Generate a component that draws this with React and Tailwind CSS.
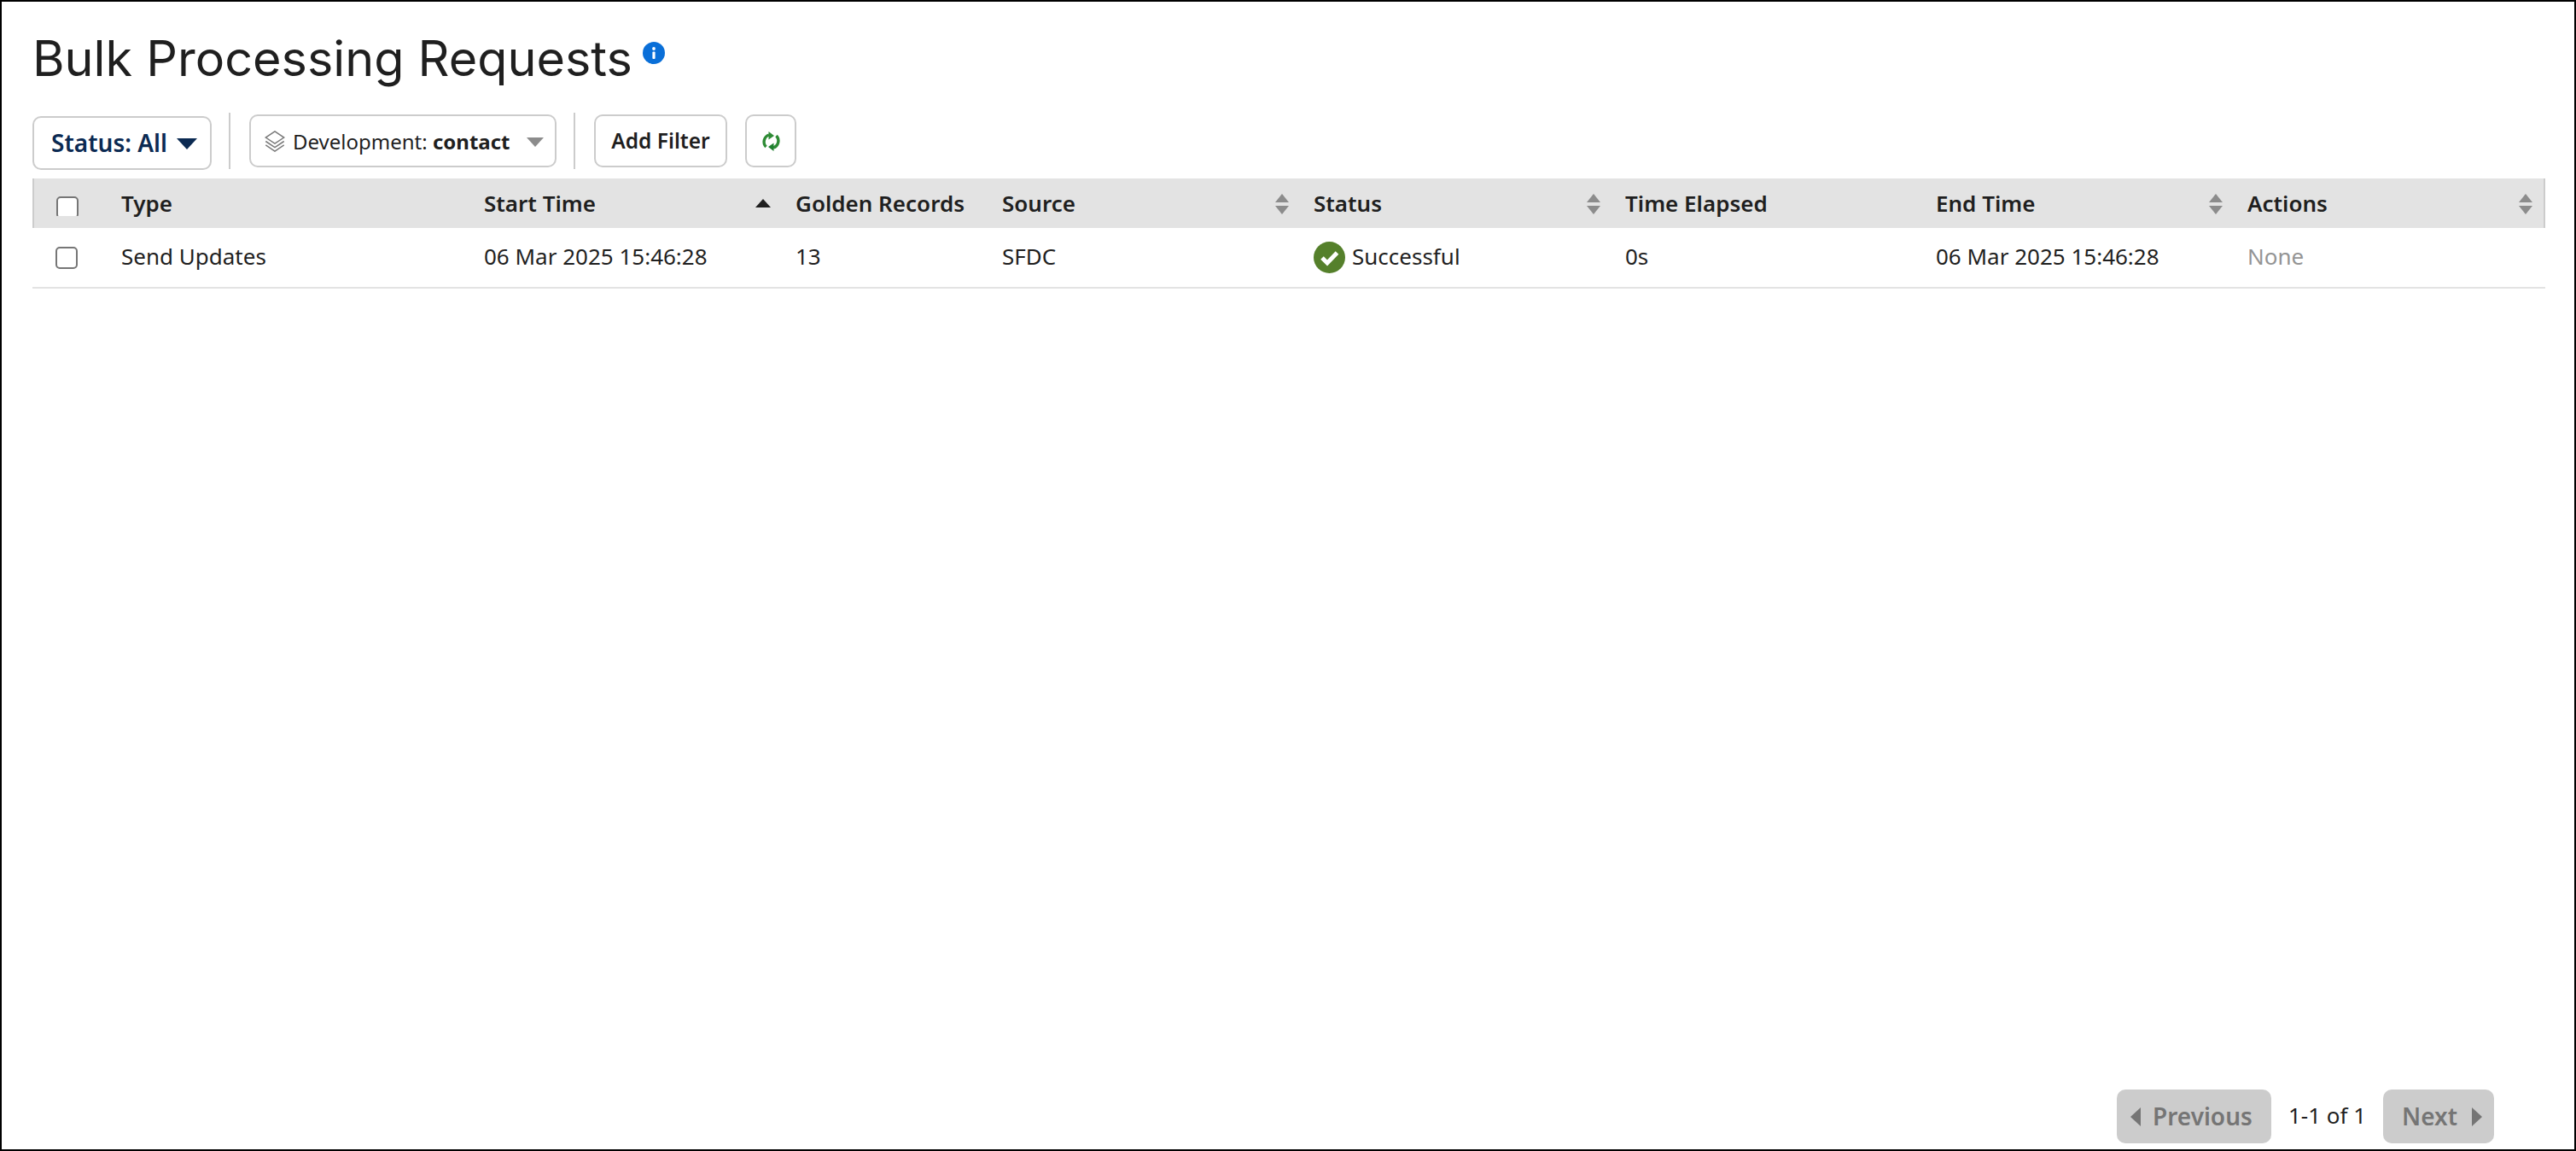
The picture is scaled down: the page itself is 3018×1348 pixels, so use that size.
import React from "react";

const columns = [
  { label: "Type" },
  { label: "Start Time", sort: "asc" },
  { label: "Golden Records" },
  { label: "Source", sort: "both" },
  { label: "Status", sort: "both" },
  { label: "Time Elapsed" },
  { label: "End Time", sort: "both" },
  { label: "Actions", sort: "last" },
];

const GRID = "grid grid-cols-[84px_425px_365px_242px_365px_365px_364px_365px_369px]";

function SortIcon({ kind }) {
  if (kind === "asc") {
    return (
      <svg width="18" height="11" viewBox="0 0 18 11" className="absolute right-[9px] top-[24px]">
        <path d="M9 0 L18 10 L0 10 Z" fill="#1f1f1f" />
      </svg>
    );
  }
  return (
    <svg
      width="18"
      height="24"
      viewBox="0 0 18 24"
      className={kind === "last" ? "absolute right-[14px] top-[18px]" : "absolute right-[8px] top-[18px]"}
    >
      <path d="M9 0 L17 10 L1 10 Z" fill="#8c8c8c" />
      <path d="M9 24 L17 14 L1 14 Z" fill="#8c8c8c" />
    </svg>
  );
}

function Box() {
  return <div className="w-[26px] h-[26px] rounded-[5px] border-2 border-[#767676] bg-white" />;
}

export default function App() {
  return (
    <div className="h-[1348px] border-2 border-black bg-white flex flex-col font-['Noto_Sans',sans-serif] text-[#1f1f1f] overflow-hidden">
      <div className="pl-[36px] pr-[34px] pt-[30px] flex items-start h-[132px]">
        <h1 className="font-['Inter',sans-serif] font-normal text-[57.5px] leading-[72px] text-[#1f1f1f]">
          Bulk Processing Requests
        </h1>
        <svg width="26" height="26" viewBox="0 0 26 26" className="ml-[12px] mt-[17px]">
          <circle cx="13" cy="13" r="13" fill="#0a6fd8" />
          <circle cx="13" cy="8" r="1.9" fill="#fff" />
          <rect x="11.4" y="11.4" width="3.2" height="8.6" rx="1" fill="#fff" />
        </svg>
      </div>

      <div className="pl-[36px] pr-[34px] flex items-start h-[75px]">
        <button className="w-[210px] h-[63px] mt-[2px] pb-[2px] rounded-[10px] border-2 border-[#cccccc] flex items-center pl-[20px] text-[#0b2a52] text-[28px] font-semibold">
          Status: All
          <svg width="24" height="13" viewBox="0 0 24 13" className="ml-[11px] mt-[4px]">
            <path d="M0 0 H24 L12 13 Z" fill="#0b2a52" />
          </svg>
        </button>
        <div className="w-[2px] h-[66px] bg-[#cccccc] ml-[20px] mr-[22px] -mt-[2px]" />
        <button className="w-[360px] h-[62px] rounded-[10px] border-2 border-[#cccccc] flex items-center pl-[16px] text-[24px]">
          <svg width="24" height="25" viewBox="2 1 26 28" fill="none" stroke="#7a7a7a" strokeWidth="1.7" className="mr-[9px]">
            <path d="M15 2 L27 10 L15 18 L3 10 Z" />
            <path d="M3 15 L15 23 L27 15" />
            <path d="M3 20 L15 28 L27 20" />
          </svg>
          <span className="pt-[2px]">Development:&nbsp;</span>
          <span className="font-bold pt-[2px]">contact</span>
          <svg width="20" height="11" viewBox="0 0 20 11" className="ml-[19px] mt-[2px]">
            <path d="M0 0 H20 L10 11 Z" fill="#8c8c8c" />
          </svg>
        </button>
        <div className="w-[2px] h-[66px] bg-[#cccccc] ml-[20px] mr-[22px] -mt-[2px]" />
        <button className="w-[156px] h-[62px] rounded-[10px] border-2 border-[#cccccc] flex items-center justify-center text-[24.5px] font-semibold">
          Add Filter
        </button>
        <button className="w-[60px] h-[62px] ml-[21px] rounded-[10px] border-2 border-[#cccccc] flex items-center justify-center">
          <svg width="25" height="23" viewBox="0 0 25 23" fill="none">
            <path d="M10 4 A8.5 8.5 0 0 0 6.5 18" stroke="#2e8b35" strokeWidth="3.4" />
            <path d="M15 19 A8.5 8.5 0 0 0 18.5 5" stroke="#2e8b35" strokeWidth="3.4" />
            <path d="M9.5 0 L16 5 L9.5 9.5 Z" fill="#2e8b35" />
            <path d="M15.5 23 L9 18 L15.5 13.5 Z" fill="#1f7f2f" />
          </svg>
        </button>
      </div>

      <div className="pl-[36px] pr-[34px]">
        <div className={`${GRID} h-[58px] bg-[#e3e3e3] shadow-[inset_2px_0_0_#cccccc,inset_-2px_0_0_#cccccc] text-[26px] font-semibold items-center`}>
          <div className="h-full pl-[28px] pt-[21px]">
            <div className="h-[23px] overflow-hidden">
              <Box />
            </div>
          </div>
          {columns.map((c) => (
            <div key={c.label} className="relative h-full flex items-center pl-[20px]">
              {c.label}
              {c.sort && <SortIcon kind={c.sort} />}
            </div>
          ))}
        </div>
        <div className={`${GRID} h-[71px] border-b-2 border-[#e3e3e3] text-[26px] items-center`}>
          <div className="pl-[27px]">
            <Box />
          </div>
          <div className="pl-[20px] pb-[3px]">Send Updates</div>
          <div className="pl-[20px] pb-[3px]">06 Mar 2025 15:46:28</div>
          <div className="pl-[20px] pb-[3px]">13</div>
          <div className="pl-[20px] pb-[3px]">SFDC</div>
          <div className="pl-[20px] flex items-center">
            <svg width="37" height="37" viewBox="0 0 37 37" className="mr-[8px]">
              <circle cx="18.5" cy="18.5" r="18.5" fill="#55802b" />
              <path d="M10 19 L16 25 L27.5 13" fill="none" stroke="#fff" strokeWidth="5" />
            </svg>
            <span className="pb-[3px]">Successful</span>
          </div>
          <div className="pl-[20px] pb-[3px]">0s</div>
          <div className="pl-[20px] pb-[3px]">06 Mar 2025 15:46:28</div>
          <div className="pl-[20px] pb-[3px] text-[#949494]">None</div>
        </div>
      </div>

      <div className="mt-auto pr-[94px] pb-[7px] flex justify-end items-center">
        <button className="w-[181px] h-[63px] pb-[2px] pl-[16px] rounded-[10px] bg-[#cccccc] text-[#757575] text-[28px] font-semibold flex items-center">
          <svg width="12" height="22" viewBox="0 0 12 22" className="mr-[14px] mt-[2px]">
            <path d="M12 0 V22 L0 11 Z" fill="#757575" />
          </svg>
          Previous
        </button>
        <span className="w-[131px] text-center text-[26px] pb-[2px]">1-1 of 1</span>
        <button className="w-[130px] h-[63px] pb-[2px] pl-[22px] rounded-[10px] bg-[#cccccc] text-[#757575] text-[28px] font-semibold flex items-center">
          Next
          <svg width="12" height="22" viewBox="0 0 12 22" className="ml-[17px] mt-[2px]">
            <path d="M0 0 V22 L12 11 Z" fill="#757575" />
          </svg>
        </button>
      </div>
    </div>
  );
}
